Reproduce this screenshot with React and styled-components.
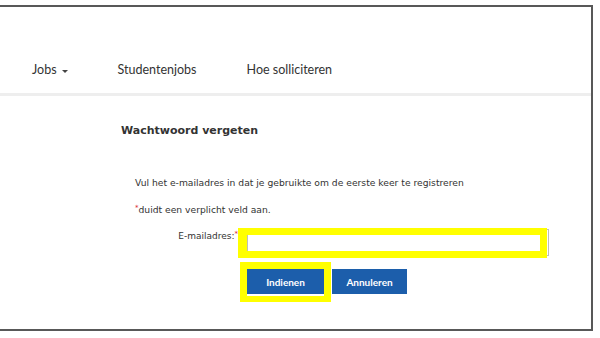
import React from 'react';
import styled, { createGlobalStyle } from 'styled-components';

const GlobalStyle = createGlobalStyle`
  html, body {
    margin: 0;
    padding: 0;
    background: #ffffff;
    width: 600px;
    height: 338px;
    overflow: hidden;
  }
`;

// Styled Components
const Page = styled.div`
  width: 600px;
  height: 338px;
  padding-top: 5px;
  box-sizing: border-box;
`;

const Frame = styled.div`
  margin-left: -2px;
  width: 595px;
  height: 326px;
  box-sizing: border-box;
  border: 2px solid #585858;
  display: flex;
  flex-direction: column;
`;

const NavBar = styled.nav`
  height: 89px;
  box-sizing: border-box;
  display: flex;
  align-items: flex-end;
  gap: 50px;
  padding: 0 0 15px 32px;
  border-bottom: 3px solid #eeeeee;
`;

const NavLink = styled.a`
  font-family: Lato, 'Open Sans', sans-serif;
  font-size: 12.5px;
  line-height: 16px;
  color: #333333;
  text-decoration: none;
  display: flex;
  align-items: center;
  gap: 5px;
`;

const Caret = styled.span`
  width: 0;
  height: 0;
  border-left: 3px solid transparent;
  border-right: 3px solid transparent;
  border-top: 3px solid #444444;
  margin-top: 2px;
`;

const Content = styled.main`
  padding: 28px 0 0 121px;
  font-family: 'DejaVu Sans', Verdana, sans-serif;
  color: #333333;
`;

const Title = styled.h1`
  margin: 0;
  font-size: 11px;
  line-height: 14px;
  font-weight: bold;
`;

const Text = styled.p`
  margin: ${(p) => p.$top}px 0 0 14px;
  font-size: 9.2px;
  line-height: 12px;
`;

const Required = styled.span`
  color: #d9262b;
  font-size: 7px;
  vertical-align: top;
  line-height: 8px;
`;

const FormGrid = styled.div`
  margin-top: 13px;
  display: grid;
  grid-template-columns: 117px 302px;
  column-gap: 9px;
  row-gap: 13px;
`;

const Label = styled.label`
  font-size: 9px;
  line-height: 12px;
  padding-top: 1px;
  text-align: right;
`;

const Field = styled.div`
  position: relative;
  height: 27px;
`;

const Input = styled.input`
  display: block;
  width: 100%;
  height: 27px;
  box-sizing: border-box;
  border: 1px solid #bdbdbd;
  border-radius: 0;
  margin: 0;
  padding: 0 6px;
`;

const Highlight = styled.div`
  position: absolute;
  top: ${(p) => p.$t}px;
  right: ${(p) => p.$r}px;
  bottom: ${(p) => p.$b}px;
  left: ${(p) => p.$l}px;
  border-style: solid;
  border-color: #ffff00;
  border-width: ${(p) => p.$w};
  pointer-events: none;
`;

const Buttons = styled.div`
  grid-column: 2;
  display: flex;
  gap: 8px;
`;

const ButtonSlot = styled.div`
  position: relative;
`;

const Button = styled.button`
  height: 25px;
  width: ${(p) => p.$w}px;
  margin: 0;
  padding: 0;
  border: none;
  background: #1c5eab;
  color: #ffffff;
  font-family: Lato, 'Open Sans', sans-serif;
  font-weight: bold;
  font-size: 10px;
`;

function App() {
  return (
    <Page>
      <GlobalStyle />
      <Frame>
        <NavBar>
          <NavLink>
            Jobs <Caret />
          </NavLink>
          <NavLink>Studentenjobs</NavLink>
          <NavLink>Hoe solliciteren</NavLink>
        </NavBar>

        <Content>
          <Title>Wachtwoord vergeten</Title>
          <Text $top={39}>Vul het e-mailadres in dat je gebruikte om de eerste keer te registreren</Text>
          <Text $top={15}>
            <Required>*</Required>duidt een verplicht veld aan.
          </Text>

          <FormGrid>
            <Label>
              E-mailadres:<Required>*</Required>
            </Label>
            <Field>
              <Input type="email" />
              <Highlight $t={-1} $r={2} $b={-2} $l={-9} $w="7px 7px 7px 9px" />
            </Field>
            <Buttons>
              <ButtonSlot>
                <Button $w={77}>Indienen</Button>
                <Highlight $t={-7} $r={-7} $b={-8} $l={-7} $w="7px 7px 6px 7px" />
              </ButtonSlot>
              <Button $w={75}>Annuleren</Button>
            </Buttons>
          </FormGrid>
        </Content>
      </Frame>
    </Page>
  );
}

export default App;
